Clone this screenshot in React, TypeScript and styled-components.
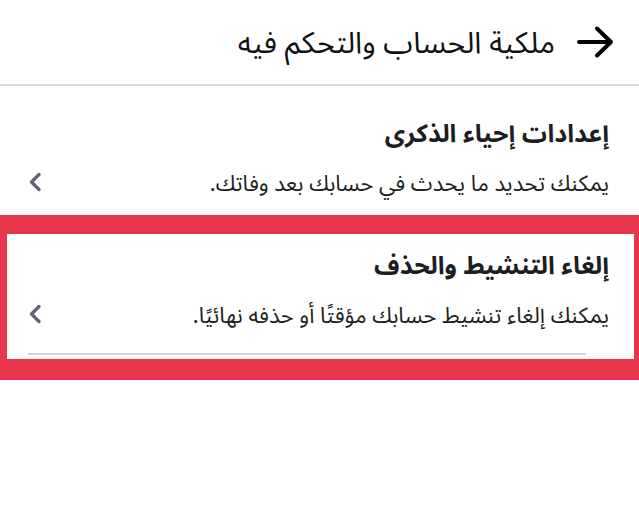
import React from "react";
import styled, { createGlobalStyle } from "styled-components";

const Global = createGlobalStyle`
  html, body { margin: 0; padding: 0; background: #ffffff; }
  body { font-family: "Noto Sans Arabic", "Noto Naskh Arabic", "DejaVu Sans", sans-serif; }
`;

const Page = styled.div`
  direction: rtl;
  width: 639px;
  height: 522px;
  background: #fff;
  display: flex;
  flex-direction: column;
  overflow: hidden;
`;

const Header = styled.header`
  height: 84px;
  display: flex;
  align-items: center;
  gap: 20px;
  padding-right: 24px;
  border-bottom: 2px solid #dadada;
  box-sizing: content-box;
`;

const BackButton = styled.span`
  display: flex;
  width: 40px;
  height: 36px;
  align-items: center;
  justify-content: center;
`;

const HeaderTitle = styled.h1`
  margin: 4px 0 0 0;
  font-size: 30px;
  line-height: 40px;
  font-weight: 400;
  color: #111;
`;

const Section = styled.section<{ $height: number; $inset?: boolean }>`
  height: ${(p) => p.$height}px;
  box-sizing: border-box;
  display: flex;
  flex-direction: column;
  padding: 0 ${(p) => (p.$inset ? 25 : 30)}px 0 0;
`;

const Highlight = styled.div`
  border-style: solid;
  border-color: #e7354a;
  border-width: 19px 5px 21px 7px;
`;

const Title = styled.h2<{ $top: number }>`
  margin: ${(p) => p.$top}px 0 0 0;
  font-size: 25px;
  line-height: 32px;
  font-weight: 700;
  color: #1c1e21;
`;

const Row = styled.div<{ $top: number }>`
  display: flex;
  align-items: center;
  justify-content: space-between;
  margin-top: ${(p) => p.$top}px;
`;

const Subtitle = styled.p`
  margin: 0;
  font-size: 22px;
  line-height: 32px;
  color: #1c1e21;
`;

const Chevron = styled.span<{ $inset?: boolean }>`
  display: flex;
  margin-left: ${(p) => (p.$inset ? 21 : 28)}px;
  margin-top: -4px;
`;

const Divider = styled.div`
  height: 2px;
  background: #d4d5d9;
  margin: auto 23px 4px 0;
  margin-left: 21px;
`;

const ChevronIcon = () => (
  <svg width="14" height="20" viewBox="0 0 14 20">
    <path d="M11 2.5 L3.5 10 L11 17.5" fill="none" stroke="#606770" strokeWidth="3.4" strokeLinecap="round" strokeLinejoin="round" />
  </svg>
);

const ArrowIcon = () => (
  <svg width="40" height="34" viewBox="0 0 40 34">
    <path d="M4 17 H36 M22 3.5 L36 17 L22 30.5" fill="none" stroke="#000" strokeWidth="4" strokeLinecap="round" strokeLinejoin="round" />
  </svg>
);

export default function App() {
  return (
    <Page>
      <Global />
      <Header>
        <BackButton>
          <ArrowIcon />
        </BackButton>
        <HeaderTitle>ملكية الحساب والتحكم فيه</HeaderTitle>
      </Header>
      <Section $height={129}>
        <Title $top={32}>إعدادات إحياء الذكرى</Title>
        <Row $top={18}>
          <Subtitle>يمكنك تحديد ما يحدث في حسابك بعد وفاتك.</Subtitle>
          <Chevron>
            <ChevronIcon />
          </Chevron>
        </Row>
      </Section>
      <Highlight>
        <Section $height={125} $inset>
          <Title $top={16}>إلغاء التنشيط والحذف</Title>
          <Row $top={18}>
            <Subtitle>يمكنك إلغاء تنشيط حسابك مؤقتًا أو حذفه نهائيًا.</Subtitle>
            <Chevron $inset>
              <ChevronIcon />
            </Chevron>
          </Row>
          <Divider />
        </Section>
      </Highlight>
    </Page>
  );
}
